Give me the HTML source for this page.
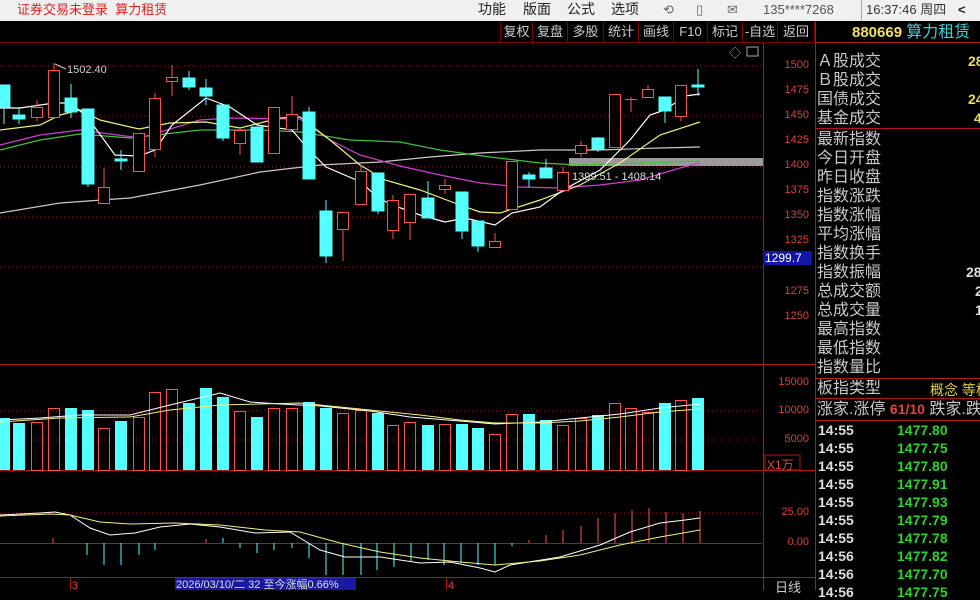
<!DOCTYPE html>
<html><head><meta charset="utf-8"><style>
*{margin:0;padding:0;box-sizing:border-box}
body{width:980px;height:590px;overflow:hidden;background:#000;font-family:"Liberation Sans","Noto Sans CJK SC",sans-serif;position:relative}
.top{position:absolute;left:0;top:0;width:980px;height:21px;background:#f0f0f0;font-size:13px;color:#222}
.top span{position:absolute;top:2px;line-height:16px}
.tb{position:absolute;top:22px;height:20px;border-left:1px solid #800000;color:#ccc;font-size:13px;line-height:20px;text-align:center}
.rp{position:absolute;left:817px;font-size:16px;color:#c8c8c8;line-height:19px;white-space:nowrap}
.ax{position:absolute;font-size:11px;color:#d84040;text-align:right;width:47px;left:762px}
.tk{position:absolute;left:818px;font-size:14px;font-weight:bold;color:#ddd;line-height:16px}
.tp{position:absolute;left:897px;font-size:14px;font-weight:bold;color:#30d030;line-height:16px}
</style></head><body>
<div class="top">
<span style="left:17px;color:#e02020">证券交易未登录&nbsp; 算力租赁</span>
<span style="left:478px;font-size:14px;top:1px">功能</span>
<span style="left:523px;font-size:14px;top:1px">版面</span>
<span style="left:567px;font-size:14px;top:1px">公式</span>
<span style="left:611px;font-size:14px;top:1px">选项</span>
<span style="left:663px;color:#666">⟲</span>
<span style="left:696px;color:#666">▯</span>
<span style="left:727px;color:#666">✉</span>
<span style="left:763px;color:#555">135****7268</span>
<span style="left:861px;top:0;width:1px;height:21px;background:#aaa"></span>
<span style="left:866px;color:#333">16:37:46 周四</span>
<span style="left:958px;font-weight:bold">&lt;</span>
</div>
<div style="position:absolute;left:0;top:42px;width:815px;height:1px;background:#7a0000"></div>
<div class="tb" style="left:500px;width:32px">复权</div>
<div class="tb" style="left:532px;width:35px">复盘</div>
<div class="tb" style="left:567px;width:36px">多股</div>
<div class="tb" style="left:603px;width:35px">统计</div>
<div class="tb" style="left:638px;width:35px">画线</div>
<div class="tb" style="left:673px;width:34px">F10</div>
<div class="tb" style="left:707px;width:35px">标记</div>
<div class="tb" style="left:742px;width:35px">-自选</div>
<div class="tb" style="left:777px;width:38px;border-right:1px solid #800000">返回</div>
<div style="position:absolute;left:852px;top:23px;height:20px;line-height:20px;font-size:15px;white-space:nowrap"><b style="color:#f0e060">880669</b> <span style="color:#40d0d0;font-size:16px">算力租赁</span></div>

<svg width="980" height="590" style="position:absolute;left:0;top:0" xmlns="http://www.w3.org/2000/svg">
<g stroke="#a01818" stroke-dasharray="1,3" stroke-width="1">
<line x1="0" y1="66" x2="762" y2="66"/><line x1="0" y1="116" x2="762" y2="116"/><line x1="0" y1="167" x2="762" y2="167"/><line x1="0" y1="217" x2="762" y2="217"/><line x1="0" y1="267" x2="762" y2="267"/>
<line x1="0" y1="411" x2="762" y2="411"/><line x1="0" y1="440" x2="762" y2="440"/><line x1="0" y1="513" x2="762" y2="513"/>
</g>
<g stroke="#b01818" stroke-width="1">
<line x1="763.5" y1="43" x2="763.5" y2="590"/><line x1="815.5" y1="22" x2="815.5" y2="590"/>
<line x1="0" y1="364.5" x2="815" y2="364.5"/><line x1="0" y1="470.5" x2="815" y2="470.5"/><line x1="0" y1="577.5" x2="815" y2="577.5"/>
<line x1="0" y1="543.5" x2="762" y2="543.5"/>
<line x1="815" y1="42.5" x2="980" y2="42.5"/><line x1="815" y1="128.5" x2="980" y2="128.5"/><line x1="815" y1="378.5" x2="980" y2="378.5"/><line x1="815" y1="398.5" x2="980" y2="398.5"/><line x1="815" y1="420.5" x2="980" y2="420.5"/>
<line x1="70.5" y1="578" x2="70.5" y2="590"/><line x1="446.5" y1="578" x2="446.5" y2="590"/>
</g>
<rect x="569" y="158" width="194" height="8" fill="#9a9a9a"/>
<g fill="none" stroke-width="1.2">
<polyline stroke="#c8c8c8" points="0,213 60,203 130,198 200,185 260,172 320,165 380,162 430,157 480,153 540,150 600,150 660,148 700,147"/>
<polyline stroke="#40c040" points="0,150 40,140 80,134 130,138 200,130 260,130 300,132 350,140 400,142 440,150 490,157 540,163 580,165 640,163 700,161"/>
<polyline stroke="#d040d0" points="0,145 40,135 80,130 140,138 200,120 230,118 300,119 330,140 360,155 400,166 440,175 480,183 520,187 560,188 600,185 640,180 680,168 700,163"/>
<polyline stroke="#f0f080" points="0,130 40,125 60,115 80,110 100,120 139,129 170,123 206,122 240,128 280,118 300,117 330,140 360,165 385,180 420,190 460,205 480,212 500,213 540,200 580,185 620,163 660,135 700,122"/>
<polyline stroke="#fff" points="0,108 20,108 54,103 71,103 88,118 115,155 139,156 155,150 172,125 206,98 230,107 257,125 292,130 309,150 326,167 361,182 378,198 395,206 420,215 445,222 465,218 495,225 512,213 540,207 563,190 600,170 630,140 650,115 665,110 685,96 700,94"/>
</g>
<g stroke-width="1">
<g stroke="#54ffff" fill="#54ffff">
<line x1="4" y1="85" x2="4" y2="124"/><rect x="-2" y="85" width="12" height="22"/>
<line x1="19" y1="107" x2="19" y2="124"/><rect x="13" y="115" width="12" height="4"/>
<line x1="71" y1="84" x2="71" y2="118"/><rect x="65" y="98" width="12" height="14"/>
<line x1="88" y1="109" x2="88" y2="187"/><rect x="82" y="109" width="12" height="75"/>
<line x1="121" y1="150" x2="121" y2="170"/><rect x="115" y="159" width="12" height="2"/>
<line x1="189" y1="71" x2="189" y2="90"/><rect x="183" y="78" width="12" height="9"/>
<line x1="206" y1="79" x2="206" y2="105"/><rect x="200" y="88" width="12" height="8"/>
<line x1="223" y1="105" x2="223" y2="141"/><rect x="217" y="105" width="12" height="33"/>
<rect x="251" y="127" width="12" height="35"/>
<line x1="309" y1="107" x2="309" y2="179"/><rect x="303" y="112" width="12" height="67"/>
<line x1="326" y1="200" x2="326" y2="263"/><rect x="320" y="211" width="12" height="45"/>
<line x1="378" y1="173" x2="378" y2="214"/><rect x="372" y="173" width="12" height="38"/>
<line x1="428" y1="181" x2="428" y2="218"/><rect x="422" y="198" width="12" height="20"/>
<line x1="462" y1="192" x2="462" y2="239"/><rect x="456" y="192" width="12" height="39"/>
<line x1="478" y1="221" x2="478" y2="252"/><rect x="472" y="221" width="12" height="25"/>
<line x1="529" y1="172" x2="529" y2="187"/><rect x="523" y="175" width="12" height="4"/>
<line x1="546" y1="159" x2="546" y2="178"/><rect x="540" y="168" width="12" height="10"/>
<line x1="598" y1="137" x2="598" y2="152"/><rect x="592" y="138" width="12" height="11"/>
<line x1="665" y1="97" x2="665" y2="123"/><rect x="659" y="97" width="12" height="14"/>
<line x1="698" y1="69" x2="698" y2="96"/><rect x="692" y="85" width="12" height="2"/>
</g>
<g stroke="#ff5050" fill="#000">
<line x1="37" y1="100" x2="37" y2="121"/><rect x="31.5" y="107.5" width="11" height="10"/>
<line x1="54" y1="63" x2="54" y2="117"/><rect x="48.5" y="70.5" width="11" height="47"/>
<line x1="104" y1="168" x2="104" y2="203"/><rect x="98.5" y="187.5" width="11" height="16"/>
<rect x="133.5" y="133.5" width="11" height="38"/>
<line x1="155" y1="93" x2="155" y2="157"/><rect x="149.5" y="98.5" width="11" height="51"/>
<line x1="172" y1="65" x2="172" y2="96"/><rect x="166.5" y="77.5" width="11" height="4"/>
<line x1="240" y1="130" x2="240" y2="155"/><rect x="234.5" y="130.5" width="11" height="13"/>
<rect x="268.5" y="107.5" width="11" height="46"/>
<line x1="292" y1="96" x2="292" y2="129"/><rect x="286.5" y="114.5" width="11" height="15"/>
<line x1="343" y1="212" x2="343" y2="261"/><rect x="337.5" y="212.5" width="11" height="17"/>
<line x1="361" y1="165" x2="361" y2="204"/><rect x="355.5" y="171.5" width="11" height="33"/>
<line x1="393" y1="195" x2="393" y2="239"/><rect x="387.5" y="200.5" width="11" height="30"/>
<line x1="410" y1="194" x2="410" y2="240"/><rect x="404.5" y="194.5" width="11" height="28"/>
<line x1="445" y1="179" x2="445" y2="194"/><rect x="439.5" y="185.5" width="11" height="4"/>
<line x1="495" y1="233" x2="495" y2="247"/><rect x="489.5" y="241.5" width="11" height="6"/>
<rect x="506.5" y="161.5" width="11" height="48"/>
<line x1="563" y1="167" x2="563" y2="190"/><rect x="557.5" y="172.5" width="11" height="18"/>
<line x1="581" y1="141" x2="581" y2="157"/><rect x="575.5" y="145.5" width="11" height="8"/>
<rect x="609.5" y="94.5" width="11" height="53"/>
<line x1="631" y1="97" x2="631" y2="112"/><line x1="625" y1="99.5" x2="637" y2="99.5"/>
<line x1="648" y1="85" x2="648" y2="97"/><rect x="642.5" y="89.5" width="11" height="8"/>
<line x1="681" y1="85" x2="681" y2="121"/><rect x="675.5" y="85.5" width="11" height="31"/>
</g>
</g>
<text x="67" y="73" fill="#ccc" font-size="11" font-family="Liberation Sans">1502.40</text>
<line x1="55" y1="64" x2="66" y2="69" stroke="#ccc"/>
<text x="572" y="180" fill="#ddd" font-size="11" font-family="Liberation Sans">1399.51 - 1408.14</text>
<text x="729" y="57" fill="#aaa" font-size="12">◇</text>
<rect x="747" y="47" width="11" height="9" fill="none" stroke="#aaa"/>
<g fill="#54ffff">
<rect x="-2" y="418" width="12" height="52"/><rect x="13" y="423" width="12" height="47"/><rect x="65" y="408" width="12" height="62"/><rect x="82" y="410" width="12" height="60"/><rect x="115" y="421" width="12" height="49"/><rect x="183" y="403" width="12" height="67"/><rect x="200" y="388" width="12" height="82"/><rect x="217" y="397" width="12" height="73"/><rect x="251" y="417" width="12" height="53"/><rect x="303" y="402" width="12" height="68"/><rect x="320" y="408" width="12" height="62"/><rect x="372" y="413" width="12" height="57"/><rect x="422" y="425" width="12" height="45"/><rect x="456" y="424" width="12" height="46"/><rect x="472" y="428" width="12" height="42"/><rect x="523" y="414" width="12" height="56"/><rect x="540" y="420" width="12" height="50"/><rect x="592" y="415" width="12" height="55"/><rect x="659" y="403" width="12" height="67"/><rect x="692" y="398" width="12" height="72"/>
</g>
<g fill="none" stroke="#ff5050">
<rect x="31.5" y="422.5" width="11" height="48"/><rect x="48.5" y="408.5" width="11" height="62"/><rect x="98.5" y="428.5" width="11" height="42"/><rect x="133.5" y="417.5" width="11" height="53"/><rect x="149.5" y="392.5" width="11" height="78"/><rect x="166.5" y="389.5" width="11" height="81"/><rect x="234.5" y="411.5" width="11" height="59"/><rect x="268.5" y="408.5" width="11" height="62"/><rect x="286.5" y="408.5" width="11" height="62"/><rect x="337.5" y="413.5" width="11" height="57"/><rect x="355.5" y="410.5" width="11" height="60"/><rect x="387.5" y="425.5" width="11" height="45"/><rect x="404.5" y="422.5" width="11" height="48"/><rect x="439.5" y="424.5" width="11" height="46"/><rect x="489.5" y="434.5" width="11" height="36"/><rect x="506.5" y="414.5" width="11" height="56"/><rect x="557.5" y="425.5" width="11" height="45"/><rect x="575.5" y="418.5" width="11" height="52"/><rect x="609.5" y="403.5" width="11" height="67"/><rect x="625.5" y="408.5" width="11" height="62"/><rect x="642.5" y="412.5" width="11" height="58"/><rect x="675.5" y="400.5" width="11" height="70"/>
</g>
<polyline fill="none" stroke="#fff" points="0,420 40,418 80,415 130,415 170,405 220,393 250,402 280,404 320,406 370,411 410,417 460,421 495,424 540,422 580,418 620,414 660,408 700,404"/>
<polyline fill="none" stroke="#f0f080" points="0,422 60,418 130,417 170,410 220,405 300,403 370,410 420,415 460,420 495,423 540,423 580,421 620,417 660,412 700,409"/>
<g stroke="#54ffff">
<line x1="87" y1="543" x2="87" y2="555"/><line x1="104" y1="543" x2="104" y2="565"/><line x1="121" y1="543" x2="121" y2="565"/><line x1="139" y1="543" x2="139" y2="555"/><line x1="155" y1="543" x2="155" y2="550"/><line x1="223" y1="543" x2="223" y2="538"/><line x1="240" y1="543" x2="240" y2="548"/><line x1="257" y1="543" x2="257" y2="553"/><line x1="274" y1="543" x2="274" y2="550"/><line x1="292" y1="543" x2="292" y2="548"/><line x1="309" y1="543" x2="309" y2="558"/><line x1="326" y1="543" x2="326" y2="575"/><line x1="343" y1="543" x2="343" y2="575"/><line x1="361" y1="543" x2="361" y2="575"/><line x1="377" y1="543" x2="377" y2="570"/><line x1="394" y1="543" x2="394" y2="567"/><line x1="411" y1="543" x2="411" y2="562"/><line x1="428" y1="543" x2="428" y2="560"/><line x1="444" y1="543" x2="444" y2="565"/><line x1="461" y1="543" x2="461" y2="563"/><line x1="478" y1="543" x2="478" y2="565"/><line x1="495" y1="543" x2="495" y2="565"/><line x1="512" y1="543" x2="512" y2="546"/>
</g>
<g stroke="#ff5050">
<line x1="53" y1="543" x2="53" y2="538"/><line x1="206" y1="543" x2="206" y2="539"/><line x1="529" y1="543" x2="529" y2="540"/><line x1="546" y1="543" x2="546" y2="535"/><line x1="563" y1="543" x2="563" y2="530"/><line x1="581" y1="543" x2="581" y2="526"/><line x1="598" y1="543" x2="598" y2="518"/><line x1="615" y1="543" x2="615" y2="513"/><line x1="632" y1="543" x2="632" y2="510"/><line x1="649" y1="543" x2="649" y2="508"/><line x1="666" y1="543" x2="666" y2="512"/><line x1="683" y1="543" x2="683" y2="513"/><line x1="700" y1="543" x2="700" y2="511"/>
</g>
<polyline fill="none" stroke="#fff" points="0,515 40,513 55,512 70,515 90,528 110,535 135,533 160,527 190,524 220,527 255,533 290,532 320,550 345,557 380,557 420,563 450,562 480,568 495,572 510,565 560,557 600,545 630,532 660,523 685,520 700,518"/>
<polyline fill="none" stroke="#f0f080" points="0,516 50,514 70,515 100,522 130,524 175,523 220,525 265,530 300,532 340,543 380,552 420,558 460,562 495,565 540,561 580,555 620,545 660,537 700,530"/>
<rect x="175" y="578" width="181" height="12" fill="#1a1aa0"/>
<text x="176" y="588" fill="#ddd" font-size="11" font-family="Liberation Sans,Noto Sans CJK SC">2026/03/10/二 32 至今涨幅0.66%</text>
<text x="72" y="589" fill="#e04848" font-size="11">3</text>
<text x="448" y="589" fill="#e04848" font-size="11">4</text>
<rect x="763" y="251" width="49" height="14" fill="#1414a8"/>
<rect x="765" y="455" width="35" height="15" fill="none" stroke="#b01818"/>
</svg>

<div class="ax" style="top:59px">1500</div><div class="ax" style="top:84px">1475</div><div class="ax" style="top:109px">1450</div><div class="ax" style="top:134px">1425</div><div class="ax" style="top:159px">1400</div><div class="ax" style="top:184px">1375</div><div class="ax" style="top:209px">1350</div><div class="ax" style="top:234px">1325</div><div class="ax" style="top:285px">1275</div><div class="ax" style="top:310px">1250</div>
<div style="position:absolute;left:765px;top:251px;font-size:12px;color:#fff">1299.7</div>
<div class="ax" style="top:376px">15000</div><div class="ax" style="top:404px">10000</div><div class="ax" style="top:433px">5000</div>
<div style="position:absolute;left:767px;top:456px;font-size:12px;color:#e04848">X1万</div>
<div class="ax" style="top:506px">25.00</div><div class="ax" style="top:536px">0.00</div>
<div style="position:absolute;left:775px;top:577px;font-size:13px;color:#ccc">日线</div>

<div class="rp" style="top:52px">Ａ股成交<br>Ｂ股成交<br>国债成交<br>基金成交</div>
<div class="rp" style="top:130px">最新指数<br>今日开盘<br>昨日收盘<br>指数涨跌<br>指数涨幅<br>平均涨幅<br>指数换手<br>指数振幅<br>总成交额<br>总成交量<br>最高指数<br>最低指数<br>指数量比</div>
<div class="rp" style="top:379px">板指类型</div>
<div class="rp" style="top:400px">涨家.涨停 <b style="color:#e84040;font-size:14px">61/10</b> 跌家.跌</div>
<div style="position:absolute;left:968px;top:53px;font-size:14px;font-weight:bold;color:#e0e060">28</div>
<div style="position:absolute;left:968px;top:91px;font-size:14px;font-weight:bold;color:#e0e060">24</div>
<div style="position:absolute;left:974px;top:110px;font-size:14px;font-weight:bold;color:#e0e060">4</div>
<div style="position:absolute;left:966px;top:264px;font-size:14px;font-weight:bold;color:#ddd">28</div>
<div style="position:absolute;left:975px;top:283px;font-size:14px;font-weight:bold;color:#ddd">2</div>
<div style="position:absolute;left:975px;top:302px;font-size:14px;font-weight:bold;color:#ddd">1</div>
<div style="position:absolute;left:930px;top:380px;font-size:14px;color:#e0d040;white-space:nowrap">概念 等権</div>
<div class="tk" style="top:422px">14:55</div><div class="tp" style="top:422px">1477.80</div>
<div class="tk" style="top:440px">14:55</div><div class="tp" style="top:440px">1477.75</div>
<div class="tk" style="top:458px">14:55</div><div class="tp" style="top:458px">1477.80</div>
<div class="tk" style="top:476px">14:55</div><div class="tp" style="top:476px">1477.91</div>
<div class="tk" style="top:494px">14:55</div><div class="tp" style="top:494px">1477.93</div>
<div class="tk" style="top:512px">14:55</div><div class="tp" style="top:512px">1477.79</div>
<div class="tk" style="top:530px">14:55</div><div class="tp" style="top:530px">1477.78</div>
<div class="tk" style="top:548px">14:56</div><div class="tp" style="top:548px">1477.82</div>
<div class="tk" style="top:566px">14:56</div><div class="tp" style="top:566px">1477.70</div>
<div class="tk" style="top:584px">14:56</div><div class="tp" style="top:584px">1477.75</div>
</body></html>
